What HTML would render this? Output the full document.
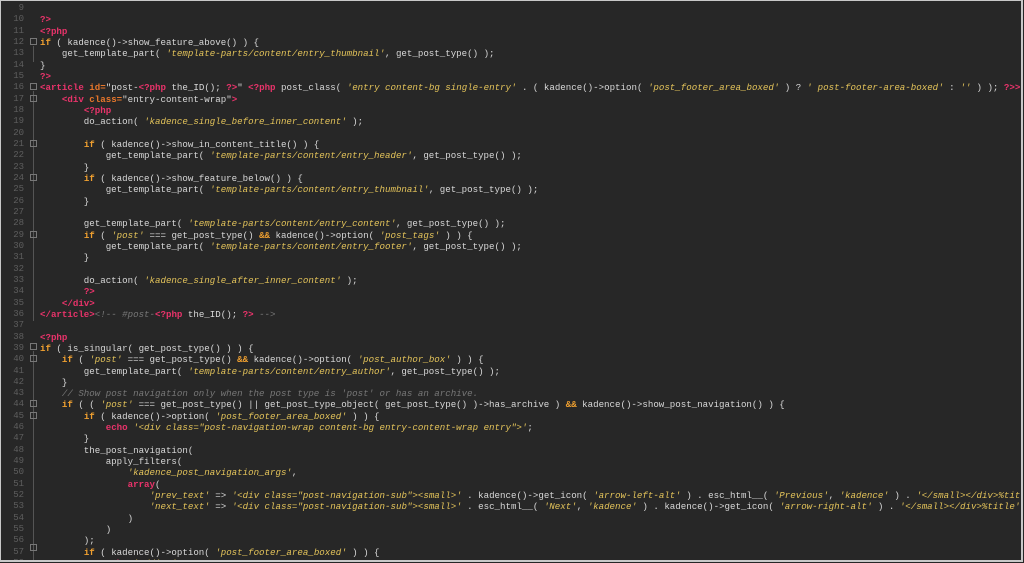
<!DOCTYPE html>
<html><head><meta charset="utf-8"><style>
html,body{margin:0;padding:0;background:#262626;}
body{width:1024px;height:563px;overflow:hidden;position:relative;}
#f{position:absolute;left:0;top:0;width:1020px;height:559px;border:2px solid #c8c8c8;border-left-width:1px;border-top-width:1px;background:#272727;overflow:hidden;}
.g{position:absolute;left:0;top:2px;width:23px;text-align:right;font:9px/11.33px "Liberation Mono",monospace;color:#5e5e5e;white-space:pre;}
pre{position:absolute;left:39px;top:2px;margin:0;font:9.15px/11.33px "Liberation Mono",monospace;color:#d8d8d8;white-space:pre;}
.k{color:#f0a030;font-weight:bold}
.t{color:#e8336a;font-weight:bold}
.s{color:#e3c35a;font-style:italic}
.c{color:#777;font-style:italic}
.a{color:#e8772b;font-weight:bold}
.fm{position:absolute;left:29px;width:7px;height:7px;border:1px solid #777;box-sizing:border-box;}
.fl{position:absolute;left:32px;width:1px;background:#555;}
</style></head><body><div id="f">
<div class="g">9
10
11
12
13
14
15
16
17
18
19
20
21
22
23
24
25
26
27
28
29
30
31
32
33
34
35
36
37
38
39
40
41
42
43
44
45
46
47
48
49
50
51
52
53
54
55
56
57
58</div>
<div class="fm" style="top:37px"></div><div class="fl" style="top:45px;height:16px"></div>
<div class="fm" style="top:82px"></div><div class="fl" style="top:90px;height:230px"></div>
<div class="fm" style="top:94px"></div>
<div class="fm" style="top:139px"></div><div class="fm" style="top:173px"></div><div class="fm" style="top:230px"></div>
<div class="fm" style="top:342px"></div><div class="fl" style="top:350px;height:210px"></div>
<div class="fm" style="top:354px"></div><div class="fm" style="top:399px"></div><div class="fm" style="top:411px"></div>
<div class="fm" style="top:543px"></div>
<pre>

<span class="t">?&gt;</span>
<span class="t">&lt;?php</span>
<span class="k">if</span> ( kadence()-&gt;show_feature_above() ) {
    get_template_part( <span class="s">'template-parts/content/entry_thumbnail'</span>, get_post_type() );
}
<span class="t">?&gt;</span>
<span class="t">&lt;article</span> <span class="a">id=</span>"post-<span class="t">&lt;?php</span> the_ID(); <span class="t">?&gt;</span>" <span class="t">&lt;?php</span> post_class( <span class="s">'entry content-bg single-entry'</span> . ( kadence()-&gt;option( <span class="s">'post_footer_area_boxed'</span> ) ? <span class="s">' post-footer-area-boxed'</span> : <span class="s">''</span> ) ); <span class="t">?&gt;&gt;</span>
    <span class="t">&lt;div</span> <span class="a">class=</span>"entry-content-wrap"<span class="t">&gt;</span>
        <span class="t">&lt;?php</span>
        do_action( <span class="s">'kadence_single_before_inner_content'</span> );

        <span class="k">if</span> ( kadence()-&gt;show_in_content_title() ) {
            get_template_part( <span class="s">'template-parts/content/entry_header'</span>, get_post_type() );
        }
        <span class="k">if</span> ( kadence()-&gt;show_feature_below() ) {
            get_template_part( <span class="s">'template-parts/content/entry_thumbnail'</span>, get_post_type() );
        }

        get_template_part( <span class="s">'template-parts/content/entry_content'</span>, get_post_type() );
        <span class="k">if</span> ( <span class="s">'post'</span> === get_post_type() <span class="k">&amp;&amp;</span> kadence()-&gt;option( <span class="s">'post_tags'</span> ) ) {
            get_template_part( <span class="s">'template-parts/content/entry_footer'</span>, get_post_type() );
        }

        do_action( <span class="s">'kadence_single_after_inner_content'</span> );
        <span class="t">?&gt;</span>
    <span class="t">&lt;/div&gt;</span>
<span class="t">&lt;/article&gt;</span><span class="c">&lt;!-- #post-</span><span class="t">&lt;?php</span> the_ID(); <span class="t">?&gt;</span><span class="c"> --&gt;</span>

<span class="t">&lt;?php</span>
<span class="k">if</span> ( is_singular( get_post_type() ) ) {
    <span class="k">if</span> ( <span class="s">'post'</span> === get_post_type() <span class="k">&amp;&amp;</span> kadence()-&gt;option( <span class="s">'post_author_box'</span> ) ) {
        get_template_part( <span class="s">'template-parts/content/entry_author'</span>, get_post_type() );
    }
    <span class="c">// Show post navigation only when the post type is 'post' or has an archive.</span>
    <span class="k">if</span> ( ( <span class="s">'post'</span> === get_post_type() || get_post_type_object( get_post_type() )-&gt;has_archive ) <span class="k">&amp;&amp;</span> kadence()-&gt;show_post_navigation() ) {
        <span class="k">if</span> ( kadence()-&gt;option( <span class="s">'post_footer_area_boxed'</span> ) ) {
            <span class="t">echo</span> <span class="s">'&lt;div class="post-navigation-wrap content-bg entry-content-wrap entry"&gt;'</span>;
        }
        the_post_navigation(
            apply_filters(
                <span class="s">'kadence_post_navigation_args'</span>,
                <span class="t">array</span>(
                    <span class="s">'prev_text'</span> =&gt; <span class="s">'&lt;div class="post-navigation-sub"&gt;&lt;small&gt;'</span> . kadence()-&gt;get_icon( <span class="s">'arrow-left-alt'</span> ) . esc_html__( <span class="s">'Previous'</span>, <span class="s">'kadence'</span> ) . <span class="s">'&lt;/small&gt;&lt;/div&gt;%title'</span>,
                    <span class="s">'next_text'</span> =&gt; <span class="s">'&lt;div class="post-navigation-sub"&gt;&lt;small&gt;'</span> . esc_html__( <span class="s">'Next'</span>, <span class="s">'kadence'</span> ) . kadence()-&gt;get_icon( <span class="s">'arrow-right-alt'</span> ) . <span class="s">'&lt;/small&gt;&lt;/div&gt;%title'</span>,
                )
            )
        );
        <span class="k">if</span> ( kadence()-&gt;option( <span class="s">'post_footer_area_boxed'</span> ) ) {
            <span class="t">echo</span> <span class="s">'&lt;/div&gt;'</span>;
</pre>
</div></body></html>
